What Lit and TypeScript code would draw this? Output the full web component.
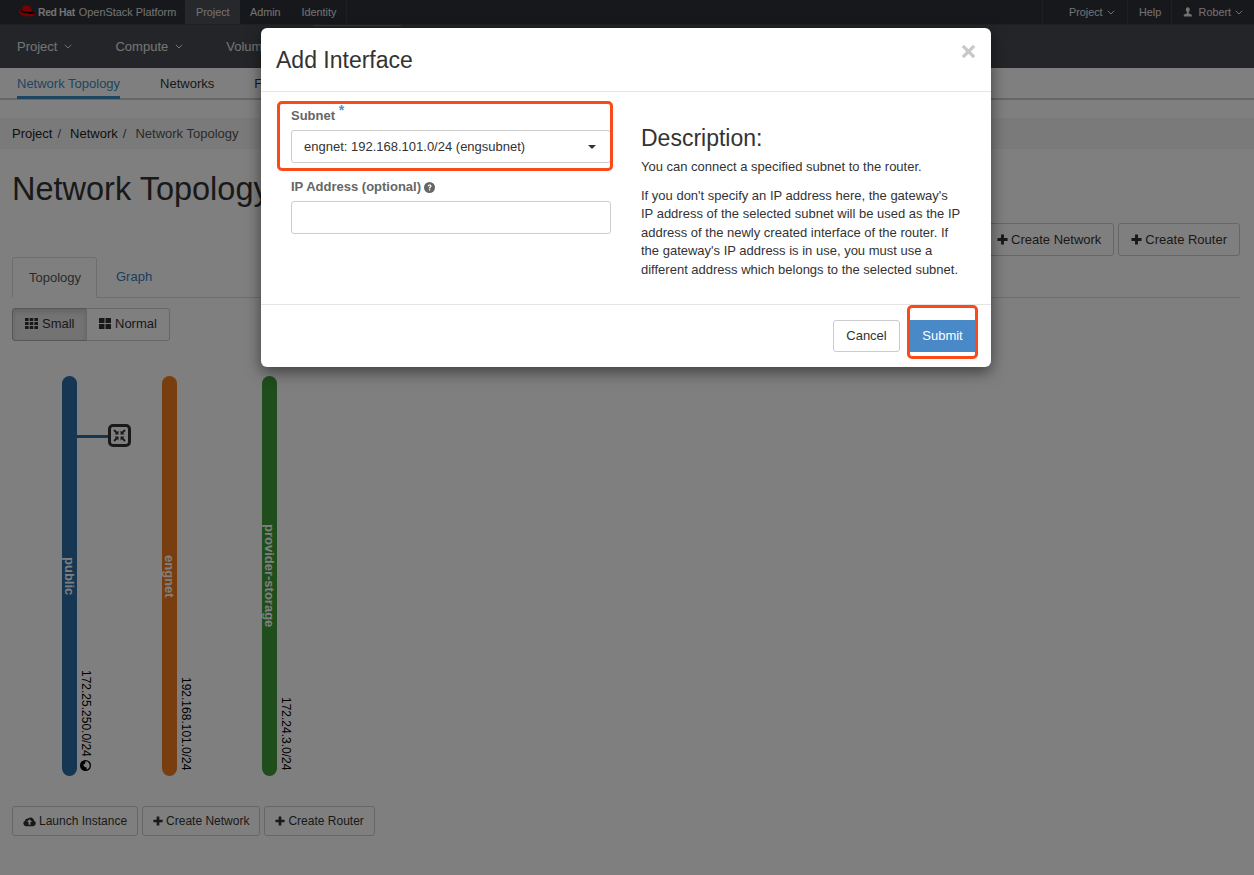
import { LitElement, html, css } from "lit";
import { customElement } from "lit/decorators.js";

const chev = html`<svg class="chev" viewBox="0 0 8 5"><path d="M.8.8 4 4 7.2.8" fill="none" stroke="currentColor" stroke-width="1"/></svg>`;
const plus = html`<svg class="ic" viewBox="0 0 12 12"><path d="M4.400 .5h3.200v3.900h3.900v3.200H7.600v3.900H4.400V7.600H.5V4.400h3.900z" fill="currentColor"/></svg>`;
const cloud = html`<svg class="ic cl" viewBox="0 0 14 11"><path fill-rule="evenodd" d="M3.200 10.500A3 3 0 0 1 2.300 4.700 2.300 2.300 0 0 1 5.300 2.500 3.800 3.800 0 0 1 12 4.800 3 3 0 0 1 11.200 10.500zM7 3 4.300 6H6v3h2V6h1.700z" fill="currentColor"/></svg>`;
const grid3 = html`<svg class="ic th" viewBox="0 0 13 11"><path d="M0 0h3.600v3H0zM4.700 0h3.600v3H4.700zM9.400 0H13v3H9.400zM0 4h3.600v3H0zM4.700 4h3.600v3H4.700zM9.400 4H13v3H9.400zM0 8h3.600v3H0zM4.700 8h3.600v3H4.700zM9.400 8H13v3H9.400z" fill="currentColor"/></svg>`;
const grid2 = html`<svg class="ic th two" viewBox="0 0 12 11"><path d="M0 0h5.500v5H0zM6.500 0H12v5H6.500zM0 6h5.500v5H0zM6.500 6H12v5H6.500z" fill="currentColor"/></svg>`;

@customElement("app-root")
export class AppRoot extends LitElement {
  static styles = css`
    :host { display: block; font-family: "Liberation Sans", Arial, sans-serif; font-size: 13px; color: #333; }
    * { box-sizing: border-box; }
    .page { position: relative; width: 1254px; height: 875px; overflow: hidden; background: #fff; }
    .top { display: flex; justify-content: space-between; height: 25px; background: #2d3136; border-bottom: 1px solid #3c4045; font-size: 10.800px; color: #e4e4e4; }
    .top-l, .top-r { display: flex; }
    .brand { display: flex; align-items: center; width: 185px; padding-left: 17px; gap: 1px; font-size: 10.300px; color: #e4e4e4; white-space: nowrap; }
    .brand svg { width: 20px; height: 14px; flex: none; margin-top: -3px; }
    .brand b { letter-spacing: -0.3px; }
    .brand span { font-size: 10.900px; margin-left: 3px; }
    .ti { display: flex; align-items: center; padding: 0 10px; gap: 4px; height: 24px; }
    .ti.act { background: #4d5156; width: 55px; padding: 0 11px; }
    .top-l .last { border-right: 1px solid #3c4045; padding-left: 11px; }
    .top-r .ti { border-left: 1px solid #3c4045; padding: 0 11px; }
    .user { width: 12px; height: 12px; margin-right: 2px; }
    .chev { width: 8px; height: 5px; flex: none; }
    .main { position: relative; display: flex; height: 43px; background: #474b50; color: #e8e8e8; align-items: center; font-size: 13px; padding-left: 17px; gap: 43px; }
    .main::before { content: ""; position: absolute; left: 313px; top: 0; width: 88px; height: 1px; background: #6a6e73; }
    .main div { display: flex; align-items: center; gap: 7px; }
    .sub { display: flex; height: 32px; padding: 0 0 0 17px; gap: 40px; border-bottom: 2px solid #ccc; font-size: 13px; color: #333; }
    .sub div { height: 31px; padding-top: 8px; line-height: 15px; }
    .sub .on { color: #3c8bc0; border-bottom: 3px solid #3c8bc0; }
    .crumb { display: flex; margin-top: 18px; height: 31px; align-items: center; padding-left: 12px; background: #f5f5f5; color: #222; white-space: pre; }
    .crumb i { font-style: normal; color: #555; margin: 0 9px 0 5px; }
    .crumb .cur { color: #555; }
    h1 { margin: 22px 0 0 12px; font-size: 32.500px; font-weight: 400; line-height: 37px; color: #333; height: 37px; white-space: nowrap; }
    .acts { display: flex; justify-content: flex-end; gap: 4px; padding: 15px 14px 0 0; height: 49px; }
    .btn { display: inline-flex; align-items: center; gap: 3px; height: 33px; padding: 0 12px; border: 1px solid #ccc; border-radius: 3px; font-size: 13px; color: #333; background: #fff; white-space: nowrap; }
    .ic { width: 11px; height: 11px; flex: none; }
    .ic.cl { width: 13px; }
    .ic.th { width: 13px; height: 11px; }
    .ic.two { width: 12px; }
    .tabs { display: flex; height: 41px; margin: 0 14px 0 12px; border-bottom: 1px solid #ddd; }
    .tab { padding: 0 16px; line-height: 39px; height: 41px; }
    .tab.on { width: 85px; border: 1px solid #ddd; border-bottom-color: #fff; border-radius: 3px 3px 0 0; color: #555; }
    .tab.lnk { color: #3c7ab8; padding: 0 19px; }
    .seg { display: flex; margin: 10px 0 0 12px; width: 158px; }
    .seg .btn { border-radius: 0; gap: 4px; padding-bottom: 2px; }
    .seg .btn:first-child { width: 75px; border-radius: 3px 0 0 3px; background: #e6e6e6; border-color: #adadad; box-shadow: inset 0 3px 5px rgba(0,0,0,.125); }
    .seg .btn:last-child { width: 84px; margin-left: -1px; border-radius: 0 3px 3px 0; }
    .graph { position: relative; height: 465px; }
    .bar { position: absolute; top: 35px; width: 15px; height: 400px; border-radius: 8px; display: flex; align-items: center; justify-content: center; }
    .bar span { writing-mode: vertical-rl; color: #fff; font-weight: 700; font-size: 13px; line-height: 15px; }
    .cidr { position: absolute; left: 17px; bottom: 6px; writing-mode: vertical-rl; font-size: 12px; line-height: 13px; color: #000; white-space: nowrap; display: flex; align-items: center; gap: 3px; }
    .cidr.g { bottom: 5px; }
    .globe { width: 11px; height: 11px; }
    .wire { position: absolute; left: 77px; top: 94px; width: 32px; height: 3px; background: #2a6ea6; }
    .router { position: absolute; left: 108px; top: 83px; width: 23px; height: 23px; }
    .bottom { display: flex; gap: 4px; margin: 0 0 0 12px; }
    .bottom .btn { height: 30px; padding: 0 10px; font-size: 12px; }
    .bottom .ic { width: 10px; height: 10px; }
    .bottom .ic.cl { width: 13px; height: 11px; }
    .shade { position: absolute; inset: 0; background: rgba(0,0,0,.5); }
    .modal { position: absolute; left: 261px; top: 28px; width: 730px; height: 339px; background: #fff; border-radius: 6px; box-shadow: 0 5px 15px rgba(0,0,0,.5); display: flex; flex-direction: column; }
    .mh { display: flex; justify-content: space-between; height: 64px; padding: 16px 15px 0; border-bottom: 1px solid #e5e5e5; }
    .mh h4 { margin: 0; font-size: 23px; font-weight: 400; line-height: 33px; color: #333; }
    .close { width: 15px; height: 15px; }
    .mb { display: flex; flex: 1; }
    .fcol { width: 350px; padding: 15px 0 0 30px; }
    label { display: block; font-weight: 700; font-size: 13px; color: #666; line-height: 18px; }
    .star { color: #4a8fd0; font-size: 14px; font-weight: 700; vertical-align: 5px; line-height: 0; }
    .field { width: 320px; height: 33px; border: 1px solid #ccc; border-radius: 3px; margin-top: 5px; background: #fff; display: flex; align-items: center; justify-content: space-between; padding: 0 14px 0 12px; }
    .ip { margin-top: 15px; display: flex; align-items: center; gap: 3px; }
    .ipf { margin-top: 5px; }
    .q { width: 11px; height: 11px; }
    .caret { width: 0; height: 0; border: 4.500px solid transparent; border-top-color: #333; border-bottom: 0; }
    .dcol { padding: 32px 0 0 30px; width: 350px; line-height: 18.500px; color: #333; }
    .dcol h3 { margin: 0 0 6px; font-size: 23px; line-height: 28px; font-weight: 400; }
    .dcol p { margin: 0 0 10px; font-size: 13px; }
    .mf { display: flex; justify-content: flex-end; gap: 10px; height: 63px; border-top: 1px solid #e5e5e5; padding: 15px 16px 0; }
    .mf .btn { width: 67px; height: 32px; padding: 0 0 2px; justify-content: center; border-radius: 3px; }
    .mf .go { width: 65px; background: #4a89c8; border-color: #4a89c8; color: #fff; border-radius: 0; }
    .hl { position: absolute; border: 3px solid #fa4a1a; border-radius: 5px; pointer-events: none; }
    .hl.a { left: 16px; top: 73px; width: 336px; height: 70px; }
    .hl.b { left: 646px; top: 277px; width: 71px; height: 54px; }
  `;

  private bar(left: number, color: string, name: string, cidr: string, globe = false) {
    return html`<div class="bar" style="left:${left}px;background:${color}"><span>${name}</span>
      <div class="cidr ${globe ? "g" : ""}">${cidr}${globe ? html`<svg class="globe" viewBox="0 0 12 12"><circle cx="6" cy="6" r="6" fill="#000"/><path d="M6 1.500C8 1 10 3 10.500 5.500 11 8 9 10 7.500 10.500L7 8 5 7.500 3.500 5 5.500 4z" fill="#fff"/></svg>` : ""}</div></div>`;
  }

  render() {
    return html`<div class="page">
      <div class="top">
        <div class="top-l">
          <div class="brand"><svg viewBox="0 0 20 14"><path d="M5 5.500C5.500 2 7 .8 9 1.300 10.500 1.600 12 1.400 13 2 14 3.500 14.500 6 15 7 13 8 8 8 5 6.800z" fill="#ee0000"/><path d="M4.700 6C3.500 6 1.500 6.300 1.500 7.500 1.500 9.500 6 12.500 11 12.500 15 12.500 18.500 11.500 18.500 9.800 18.500 8.500 16.500 7.300 15 6.800 15 8.500 6 8 4.700 6z" fill="#ee0000"/><path d="M5 6.200C7 8 13 9 15.200 7 16.800 8 17.800 8.800 17.800 9.800 15 10.500 6 9.500 3.500 7.500z" fill="#000"/></svg><b>Red Hat</b><span>OpenStack Platform</span></div>
          <div class="ti act">Project</div><div class="ti">Admin</div><div class="ti last">Identity</div>
        </div>
        <div class="top-r">
          <div class="ti" style="width:85px;padding-left:26px">Project ${chev}</div>
          <div class="ti" style="width:44px">Help</div>
          <div class="ti" style="width:83px"><svg class="user" viewBox="0 0 12 12"><path d="M6 0C4.300 0 3.500 1.300 3.500 3 3.500 4.500 4.200 5.800 5 6.300V7.500L1 9.500V11.500H11V9.500L7 7.500V6.300C7.800 5.800 8.500 4.500 8.500 3 8.500 1.300 7.700 0 6 0z" fill="currentColor"/></svg>Robert ${chev}</div>
        </div>
      </div>
      <div class="main"><div>Project ${chev}</div><div>Compute ${chev}</div><div>Volumes ${chev}</div></div>
      <div class="sub"><div class="on">Network Topology</div><div>Networks</div><div>Floating IPs</div></div>
      <div class="crumb">Project<i>/</i>Network<i>/</i><span class="cur">Network Topology</span></div>
      <h1>Network Topology</h1>
      <div class="acts"><div class="btn">${plus}Create Network</div><div class="btn">${plus}Create Router</div></div>
      <div class="tabs"><div class="tab on">Topology</div><div class="tab lnk">Graph</div></div>
      <div class="seg"><div class="btn">${grid3}Small</div><div class="btn">${grid2}Normal</div></div>
      <div class="graph">
        ${this.bar(62, "#2a6ea6", "public", "172.25.250.0/24", true)}
        ${this.bar(162, "#f07d1e", "engnet", "192.168.101.0/24")}
        ${this.bar(262, "#3f9a36", "provider-storage", "172.24.3.0/24")}
        <div class="wire"></div>
        <svg class="router" viewBox="0 0 23 23"><rect x="1.500" y="1.500" width="20" height="20" rx="3.500" fill="#fff" stroke="#333" stroke-width="3"/><g fill="none" stroke="#333" stroke-width="1.800"><path d="M6 6l3 3M17 6l-3 3M6 17l3-3M17 17l-3-3"/></g><g fill="#333"><path d="M10.500 6.500v4h-4zM12.500 6.500v4h4zM10.500 16.500v-4h-4zM12.500 16.500v-4h4z"/></g></svg>
      </div>
      <div class="bottom"><div class="btn">${cloud}Launch Instance</div><div class="btn">${plus}Create Network</div><div class="btn">${plus}Create Router</div></div>
      <div class="shade"></div>
      <div class="modal">
        <div class="mh"><h4>Add Interface</h4><svg class="close" viewBox="0 0 15 15"><path d="M3 .8 7.500 5.200 12 .8 14.300 3 9.800 7.500 14.300 12 12 14.200 7.500 9.800 3 14.200.7 12 5.200 7.500.7 3z" fill="#c8c8c8"/></svg></div>
        <div class="mb">
          <div class="fcol">
            <label>Subnet <span class="star">*</span></label>
            <div class="field"><span>engnet: 192.168.101.0/24 (engsubnet)</span><span class="caret"></span></div>
            <label class="ip">IP Address (optional) <svg class="q" viewBox="0 0 12 12"><circle cx="6" cy="6" r="6" fill="#666"/><path d="M4 4.500C4.200 3.200 5 2.600 6.100 2.600 7.300 2.600 8.200 3.300 8.200 4.400 8.200 5.700 6.800 5.800 6.800 7H5.300C5.300 5.300 6.600 5.200 6.600 4.500 6.600 4.100 6.400 3.900 6 3.900 5.600 3.900 5.400 4.200 5.300 4.700zM5.300 7.800h1.500v1.500H5.300z" fill="#fff"/></svg></label>
            <div class="field ipf"></div>
          </div>
          <div class="dcol">
            <h3>Description:</h3>
            <p>You can connect a specified subnet to the router.</p>
            <p>If you don't specify an IP address here, the gateway's IP address of the selected subnet will be used as the IP address of the newly created interface of the router. If the gateway's IP address is in use, you must use a different address which belongs to the selected subnet.</p>
          </div>
        </div>
        <div class="mf"><div class="btn">Cancel</div><div class="btn go">Submit</div></div>
        <div class="hl a"></div><div class="hl b"></div>
      </div>
    </div>`;
  }
}
